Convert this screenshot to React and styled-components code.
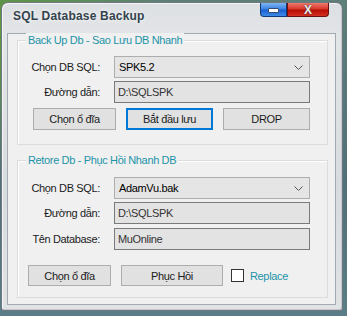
import React from 'react'
import styled, { createGlobalStyle } from 'styled-components'

const Global = createGlobalStyle`
  html, body { margin: 0; padding: 0; }
  body {
    width: 347px;
    height: 316px;
    overflow: hidden;
    background:
      radial-gradient(ellipse at 0% 10%, #5f9a3c 0%, rgba(80,130,60,0) 35%),
      linear-gradient(180deg, #5d7f78 0%, #50707a 60%, #5a7d86 100%);
    font-family: "Liberation Sans", Arial, sans-serif;
  }
`

const Window = styled.div`
  margin: 2px 0 0 1px;
  width: 342px;
  height: 309px;
  box-sizing: border-box;
  border: 1px solid #6f7881;
  border-radius: 7px 7px 3px 3px;
  background: linear-gradient(180deg, #dde0e3 0%, #e3e5e7 12%, #d9dcdf 60%, #e0e2e4 100%);
  box-shadow: inset 1px 1px 0 #f4f5f6, inset -1px -1px 0 #c3c7cb;
  display: flex;
  flex-direction: column;
`

const TitleBar = styled.div`
  height: 30px;
  display: flex;
  align-items: flex-start;
  justify-content: space-between;
  padding: 0 13px 0 11px;
`

const Title = styled.div`
  margin-top: 6px;
  font-size: 12px;
  font-weight: bold;
  letter-spacing: 0.2px;
  color: #34434d;
  text-shadow: 0 0 4px rgba(255,255,255,0.9);
`

const Caps = styled.div`
  display: flex;
`

const CapButton = styled.div`
  width: ${p => p.w}px;
  height: 14px;
  box-sizing: border-box;
  border: 1px solid ${p => (p.red ? '#6a1010' : '#123a7a')};
  border-top: none;
  border-radius: ${p => (p.red ? '0 0 4px 0' : '0 0 0 4px')};
  background: ${p =>
    p.red
      ? 'linear-gradient(180deg, #ee7a6e 0%, #d83a2a 45%, #b80d05 55%, #d43020 100%)'
      : 'linear-gradient(180deg, #7fb5f2 0%, #3b84e3 45%, #1a5fd0 55%, #3d8ae8 100%)'};
  display: flex;
  align-items: center;
  justify-content: center;
  color: #e8e8e8;
  font-weight: bold;
  font-size: 12px;
  line-height: 1;
  text-shadow: 0 0 2px #333;
`

const MinBar = styled.div`
  width: 9px;
  height: 3px;
  margin-top: 2px;
  background: #fff;
  border: 1px solid #3a4a6a;
  border-radius: 1px;
`

const Client = styled.div`
  margin: 0 6px 0 5px;
  height: 272px;
  box-sizing: border-box;
  border: 1px solid #a3abb2;
  background: #f0f0f0;
  padding: 6px 0 0 9px;
  display: flex;
  flex-direction: column;
  gap: 15px;
  font-size: 11px;
  letter-spacing: -0.35px;
`

const Group = styled.div`
  position: relative;
  width: 311px;
  height: ${p => p.h}px;
  box-sizing: border-box;
  border: 1px solid #dcdcdc;
  box-shadow: inset 1px 1px 0 #fff;
  padding: ${p => p.pt}px 0 0 0;
  display: flex;
  flex-direction: column;
`

const Caption = styled.span`
  position: absolute;
  top: -8px;
  left: 8px;
  padding: 0 2px;
  background: #f0f0f0;
  line-height: 14px;
  color: #1c93a9;
`

const Row = styled.div`
  display: flex;
  align-items: center;
  margin-bottom: ${p => p.mb || 0}px;
`

const Label = styled.div`
  width: 82px;
  margin-right: 14px;
  text-align: right;
  color: #1b1b1b;
`

const Combo = styled.div`
  width: 196px;
  height: ${p => p.h || 22}px;
  box-sizing: border-box;
  border: 1px solid #adadad;
  background: #e5e5e5;
  display: flex;
  align-items: center;
  justify-content: space-between;
  padding: 0 6px 0 4px;
  color: #000;
`

const TextBox = styled.div`
  width: 196px;
  height: ${p => p.h || 22}px;
  box-sizing: border-box;
  border: 1px solid #7a7a7a;
  background: #e3e3e3;
  display: flex;
  align-items: center;
  padding: 0 3px;
  color: #333;
`

const ButtonRow = styled.div`
  display: flex;
  align-items: center;
  padding-left: ${p => p.pl}px;
  gap: 10px;
`

const Button = styled.div`
  width: ${p => p.w}px;
  height: ${p => p.h || 22}px;
  box-sizing: border-box;
  border: ${p => (p.focus ? '2px solid #0078d7' : '1px solid #adadad')};
  background: #e1e1e1;
  display: flex;
  align-items: center;
  justify-content: center;
  color: #1b1b1b;
`

const Check = styled.div`
  width: 13px;
  height: 13px;
  box-sizing: border-box;
  border: 1px solid #333;
  background: #fff;
  margin-left: -2px;
`

const CheckText = styled.span`
  margin-left: -4px;
  color: #1c93a9;
`

const Chevron = () => (
  <svg width="9" height="5" viewBox="0 0 9 5">
    <path d="M0.5 0.5 L4.5 4.5 L8.5 0.5" fill="none" stroke="#555" strokeWidth="1" />
  </svg>
)

export default function App() {
  return (
    <>
      <Global />
      <Window>
        <TitleBar>
          <Title>SQL Database Backup</Title>
          <Caps>
            <CapButton w={27}><MinBar /></CapButton>
            <CapButton w={42} red>X</CapButton>
          </Caps>
        </TitleBar>
        <Client>
          <Group h={105} pt={15}>
            <Caption>Back Up Db - Sao Lưu DB Nhanh</Caption>
            <Row mb={3}>
              <Label>Chọn DB SQL:</Label>
              <Combo>SPK5.2<Chevron /></Combo>
            </Row>
            <Row mb={5}>
              <Label>Đường dẫn:</Label>
              <TextBox>D:\SQLSPK</TextBox>
            </Row>
            <ButtonRow pl={15}>
              <Button w={83}>Chọn ổ đĩa</Button>
              <Button w={87} focus>Bắt đầu lưu</Button>
              <Button w={87}>DROP</Button>
            </ButtonRow>
          </Group>
          <Group h={138} pt={16}>
            <Caption>Retore Db - Phục Hồi Nhanh DB</Caption>
            <Row mb={3}>
              <Label>Chọn DB SQL:</Label>
              <Combo>AdamVu.bak<Chevron /></Combo>
            </Row>
            <Row mb={4}>
              <Label>Đường dẫn:</Label>
              <TextBox>D:\SQLSPK</TextBox>
            </Row>
            <Row mb={15}>
              <Label>Tên Database:</Label>
              <TextBox>MuOnline</TextBox>
            </Row>
            <ButtonRow pl={10}>
              <Button w={83} h={21}>Chọn ổ đĩa</Button>
              <Button w={102} h={21}>Phục Hồi</Button>
              <Check />
              <CheckText>Replace</CheckText>
            </ButtonRow>
          </Group>
        </Client>
      </Window>
    </>
  )
}
